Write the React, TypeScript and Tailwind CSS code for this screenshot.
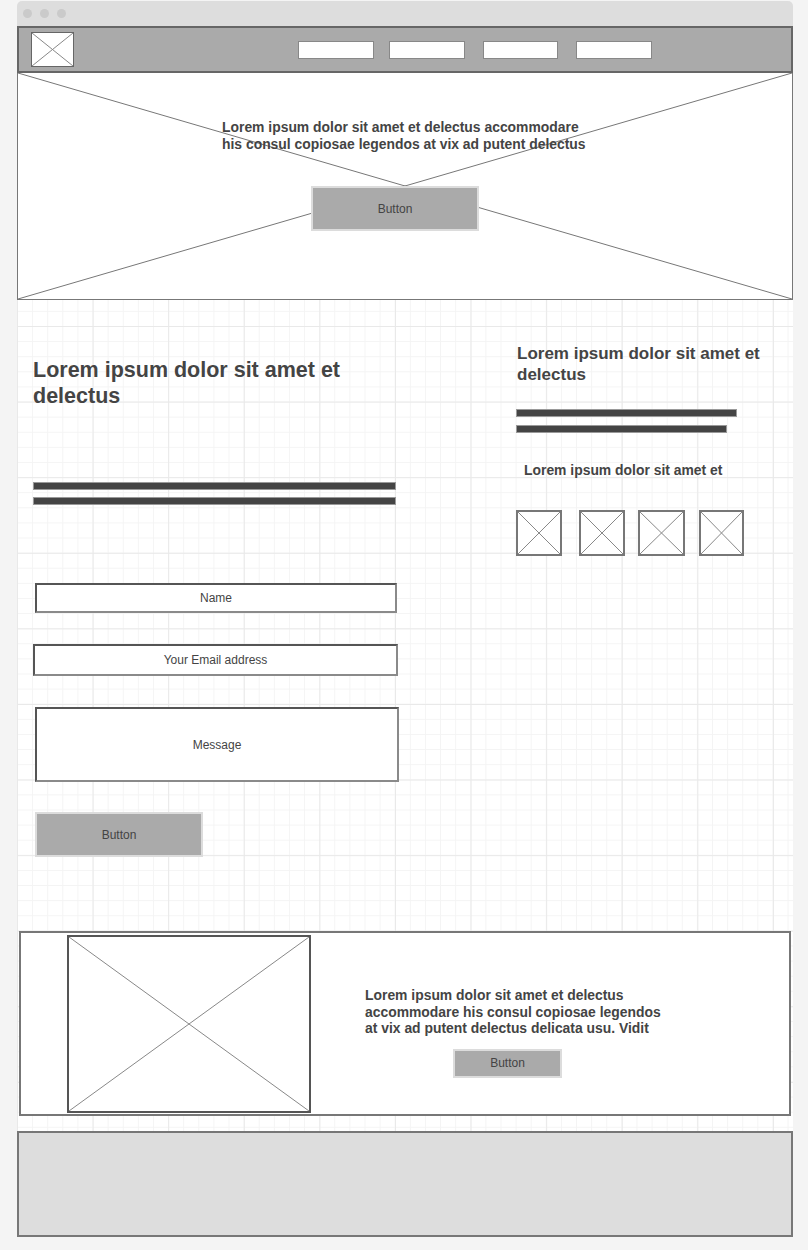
import React from "react";

const font = { fontFamily: '"Liberation Sans", Arial, sans-serif' };

function XBox({ className = "" }: { className?: string }) {
  return (
    <div className={`relative bg-white ${className}`}>
      <svg className="absolute inset-0 w-full h-full" preserveAspectRatio="none" viewBox="0 0 100 100">
        <line x1="0" y1="0" x2="100" y2="100" stroke="#888" strokeWidth="1" vectorEffect="non-scaling-stroke" />
        <line x1="100" y1="0" x2="0" y2="100" stroke="#888" strokeWidth="1" vectorEffect="non-scaling-stroke" />
      </svg>
    </div>
  );
}

function GrayButton({ className = "" }: { className?: string }) {
  return (
    <div className={`flex items-center justify-center bg-[#aaaaaa] border-2 border-[#dcdcdc] text-[12px] text-[#444] ${className}`}>
      Button
    </div>
  );
}

// input boxes: darker top/left edge like the mockup
const field =
  "bg-white border-2 border-[#8a8a8a] border-t-[#555] border-l-[#555] flex items-center justify-center text-[12px] text-[#444]";

export default function App() {
  return (
    <div className="min-h-[1250px] bg-[#f4f4f4] pt-px pl-[17px]" style={font}>
      <div className="w-[776px]">
        {/* title bar */}
        <div className="h-[25px] bg-[#dddddd] rounded-t-[5px] flex items-center gap-[8px] pl-[6px]">
          <span className="w-[9px] h-[9px] rounded-full bg-[#cacaca]" />
          <span className="w-[9px] h-[9px] rounded-full bg-[#cacaca]" />
          <span className="w-[9px] h-[9px] rounded-full bg-[#cacaca]" />
        </div>

        {/* header */}
        <div className="h-[47px] bg-[#aaaaaa] border-2 border-[#666] flex items-center pl-[12px]">
          <XBox className="w-[43px] h-[35px] border border-[#666]" />
          <div className="flex ml-[224px] gap-[15px] mt-[1px]">
            <div className="w-[76px] h-[18px] bg-white border border-[#888]" />
            <div className="w-[76px] h-[18px] bg-white border border-[#888]" />
            <div className="w-[75px] h-[18px] bg-white border border-[#888] ml-[3px]" />
            <div className="w-[76px] h-[18px] bg-white border border-[#888] ml-[3px]" />
          </div>
        </div>

        {/* hero */}
        <div className="relative h-[227px] bg-white border border-t-0 border-[#777]">
          <svg className="absolute inset-0 w-full h-full" preserveAspectRatio="none" viewBox="0 0 100 100">
            <line x1="0" y1="0" x2="100" y2="100" stroke="#777" strokeWidth="1" vectorEffect="non-scaling-stroke" />
            <line x1="100" y1="0" x2="0" y2="100" stroke="#777" strokeWidth="1" vectorEffect="non-scaling-stroke" />
          </svg>
          <div className="relative flex flex-col items-center pt-[46px]">
            <p className="w-[368px] ml-[2px] text-[13.9px] leading-[17px] font-bold text-[#444]">
              Lorem ipsum dolor sit amet et delectus accommodare
              <br />
              his consul copiosae legendos at vix ad putent delectus
            </p>
            <GrayButton className="w-[168px] h-[45px] mt-[33px] mr-[20px]" />
          </div>
        </div>

        {/* grid section */}
        <div className="bg-white bg-[linear-gradient(to_right,#e9e9e9_1px,transparent_1px),linear-gradient(to_bottom,#e9e9e9_1px,transparent_1px),linear-gradient(to_right,#f4f4f4_1px,transparent_1px),linear-gradient(to_bottom,#f4f4f4_1px,transparent_1px)] bg-[size:75.6px_75.6px,75.6px_75.6px,15.12px_15.12px,15.12px_15.12px] bg-[position:0_26px,0_26px,0_26px,0_26px] pb-[15px]">
          <div className="flex h-[631px]">
            {/* left column */}
            <div className="w-[483px] pl-[16px] pt-[57px]">
              <h1 className="w-[370px] text-[21.5px] leading-[26px] font-bold text-[#444]">
                Lorem ipsum dolor sit amet et delectus
              </h1>
              <div className="mt-[73px] w-[363px] h-[8px] bg-[#444] border border-[#999]" />
              <div className="mt-[7px] w-[363px] h-[8px] bg-[#444] border border-[#999]" />
              <div className={`mt-[78px] ml-[2px] w-[362px] h-[30px] ${field}`}>Name</div>
              <div className={`mt-[31px] w-[365px] h-[32px] ${field}`}>Your Email address</div>
              <div className={`mt-[31px] ml-[2px] w-[364px] h-[75px] ${field}`}>Message</div>
              <GrayButton className="mt-[30px] ml-[2px] w-[168px] h-[45px]" />
            </div>

            {/* right column */}
            <div className="pt-[43px] pl-[17px]">
              <h2 className="w-[255px] text-[17px] leading-[21px] font-bold text-[#444]">
                Lorem ipsum dolor sit amet et delectus
              </h2>
              <div className="mt-[24px] ml-[-1px] w-[221px] h-[8px] bg-[#444] border border-[#999]" />
              <div className="mt-[8px] ml-[-1px] w-[211px] h-[8px] bg-[#444] border border-[#999]" />
              <p className="mt-[29px] ml-[7px] text-[13.9px] leading-[17px] font-bold text-[#444]">
                Lorem ipsum dolor sit amet et
              </p>
              <div className="flex mt-[31px] ml-[-1px]">
                <XBox className="w-[46px] h-[46px] border-2 border-[#777]" />
                <XBox className="w-[46px] h-[46px] border-2 border-[#777] ml-[17px]" />
                <XBox className="w-[47px] h-[46px] border-2 border-[#777] ml-[13px]" />
                <XBox className="w-[45px] h-[46px] border-2 border-[#777] ml-[14px]" />
              </div>
            </div>
          </div>

          {/* feature card */}
          <div className="mx-[2px] h-[185px] bg-white border-2 border-[#777] flex">
            <XBox className="ml-[46px] mt-[2px] w-[244px] h-[178px] border-2 border-[#555]" />
            <div className="ml-[54px] pt-[54px]">
              <p className="w-[300px] text-[13.9px] leading-[16.5px] font-bold text-[#444]">
                Lorem ipsum dolor sit amet et delectus accommodare his consul copiosae legendos at vix ad putent delectus delicata usu. Vidit
              </p>
              <GrayButton className="mt-[12px] ml-[88px] w-[109px] h-[29px]" />
            </div>
          </div>
        </div>

        {/* footer */}
        <div className="h-[106px] bg-[#dddddd] border-2 border-[#777]" />
      </div>
    </div>
  );
}
